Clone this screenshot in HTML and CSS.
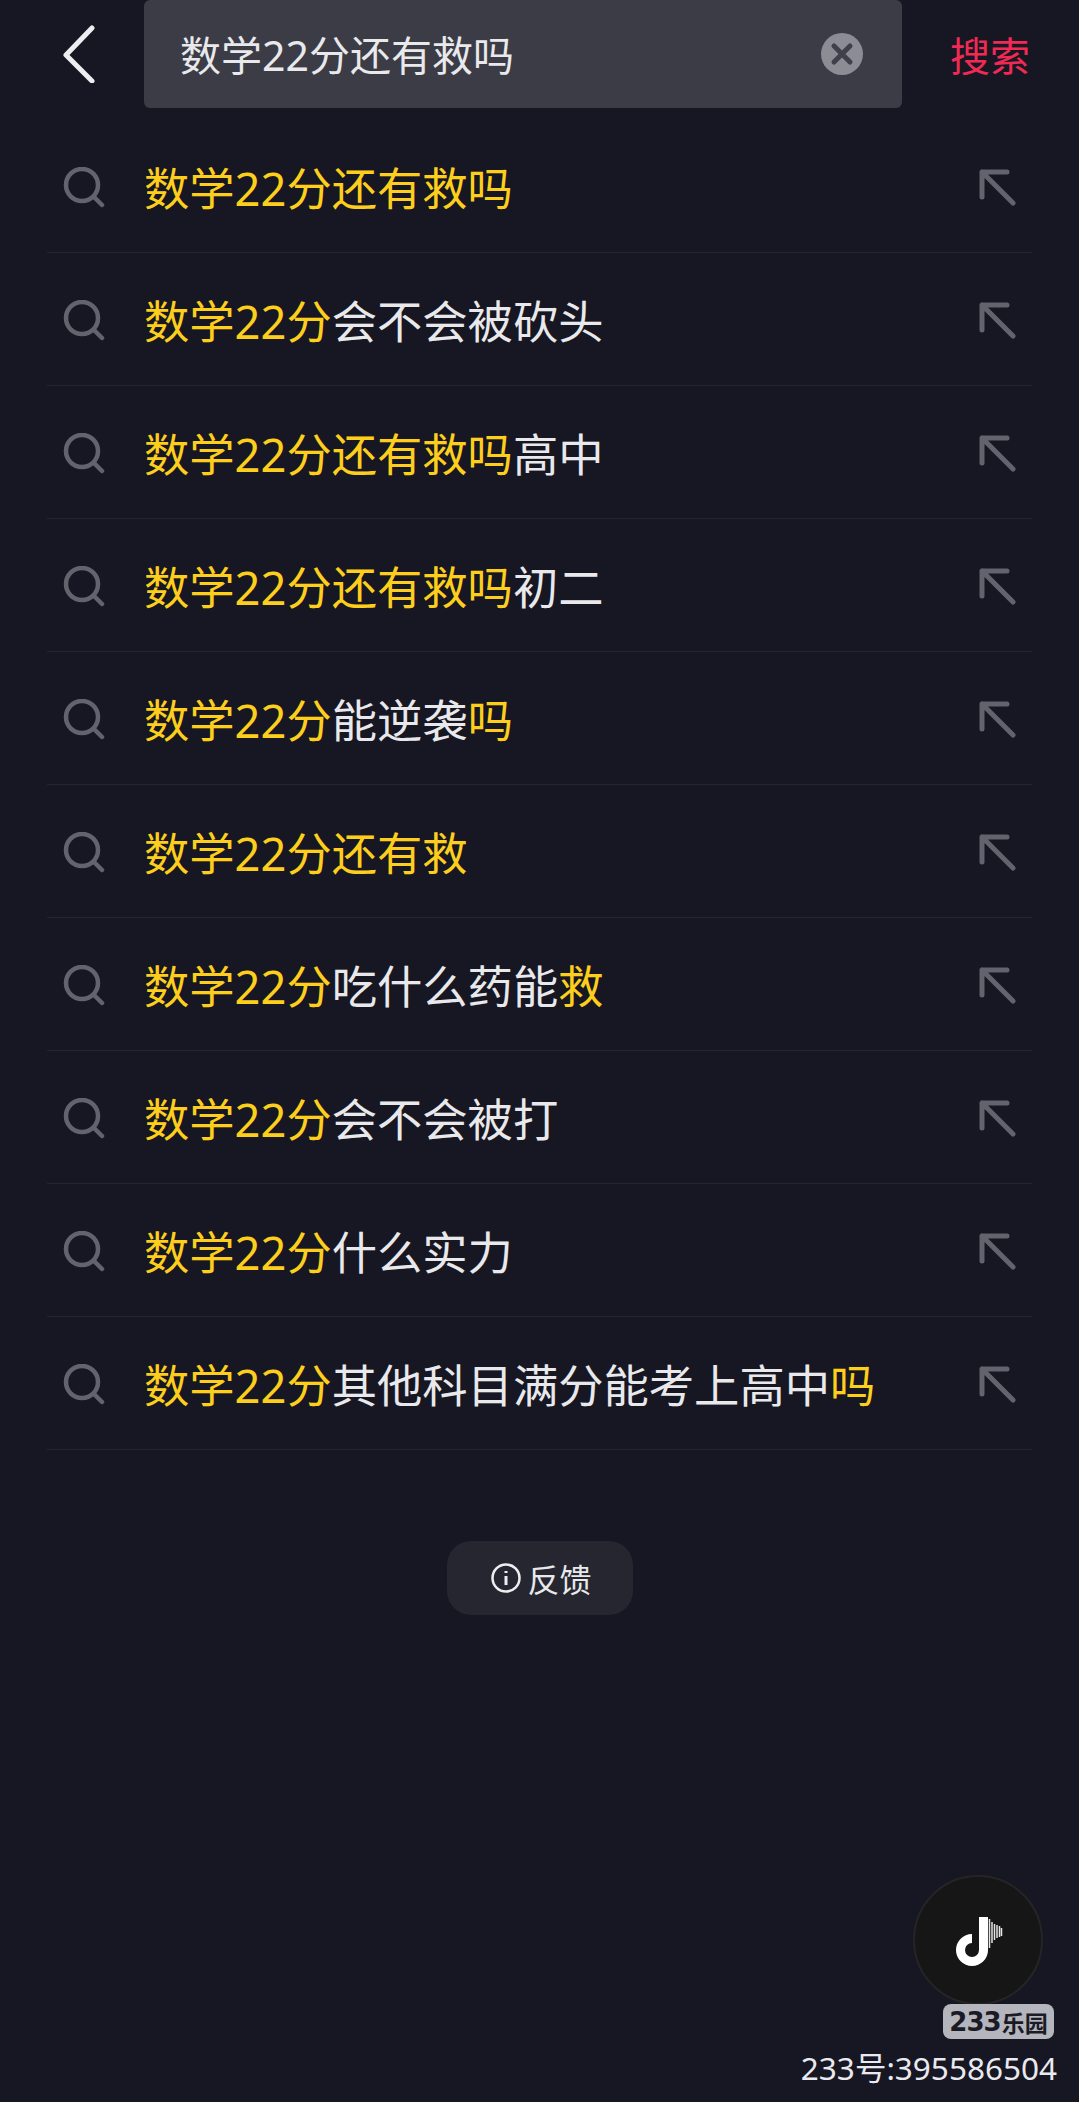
FILE: index.html
```html
<!DOCTYPE html>
<html lang="zh-CN">
  <head>
    <meta charset="UTF-8" />
    <meta name="viewport" content="width=device-width,initial-scale=1.0" />
    <title>搜索</title>
    <link rel="stylesheet" href="styles.css">
  </head>
  <body>
    <div class="search-bar">
      <svg class="back-icon" width="33" height="58" viewBox="0 0 33 58">
        <path d="M30 3 L4 30 L30 56" />
      </svg>
      <div class="search-box">
        <span class="search-text">数学22分还有救吗</span>
        <svg class="clear-icon" width="42" height="42" viewBox="0 0 42 42">
          <circle cx="21" cy="21" r="21" />
          <path d="M13 13 L29 29 M29 13 L13 29" />
        </svg>
      </div>
      <span class="search-btn">搜索</span>
    </div>

    <ul class="suggest-list">
      <li class="suggest-row">
        <svg class="find-icon" width="42" height="42" viewBox="0 0 42 42"><circle cx="19" cy="18" r="16" /><path d="M31 30 L39 38" /></svg>
        <span class="suggest-text"><b>数学22分还有救吗</b></span>
        <svg class="fill-icon" width="38" height="38" viewBox="0 0 38 38"><path d="M3 28 V3 H28 M3 3 L34 34" /></svg>
      </li>
      <li class="suggest-row">
        <svg class="find-icon" width="42" height="42" viewBox="0 0 42 42"><circle cx="19" cy="18" r="16" /><path d="M31 30 L39 38" /></svg>
        <span class="suggest-text"><b>数学22分</b>会不会被砍头</span>
        <svg class="fill-icon" width="38" height="38" viewBox="0 0 38 38"><path d="M3 28 V3 H28 M3 3 L34 34" /></svg>
      </li>
      <li class="suggest-row">
        <svg class="find-icon" width="42" height="42" viewBox="0 0 42 42"><circle cx="19" cy="18" r="16" /><path d="M31 30 L39 38" /></svg>
        <span class="suggest-text"><b>数学22分还有救吗</b>高中</span>
        <svg class="fill-icon" width="38" height="38" viewBox="0 0 38 38"><path d="M3 28 V3 H28 M3 3 L34 34" /></svg>
      </li>
      <li class="suggest-row">
        <svg class="find-icon" width="42" height="42" viewBox="0 0 42 42"><circle cx="19" cy="18" r="16" /><path d="M31 30 L39 38" /></svg>
        <span class="suggest-text"><b>数学22分还有救吗</b>初二</span>
        <svg class="fill-icon" width="38" height="38" viewBox="0 0 38 38"><path d="M3 28 V3 H28 M3 3 L34 34" /></svg>
      </li>
      <li class="suggest-row">
        <svg class="find-icon" width="42" height="42" viewBox="0 0 42 42"><circle cx="19" cy="18" r="16" /><path d="M31 30 L39 38" /></svg>
        <span class="suggest-text"><b>数学22分</b>能逆袭<b>吗</b></span>
        <svg class="fill-icon" width="38" height="38" viewBox="0 0 38 38"><path d="M3 28 V3 H28 M3 3 L34 34" /></svg>
      </li>
      <li class="suggest-row">
        <svg class="find-icon" width="42" height="42" viewBox="0 0 42 42"><circle cx="19" cy="18" r="16" /><path d="M31 30 L39 38" /></svg>
        <span class="suggest-text"><b>数学22分还有救</b></span>
        <svg class="fill-icon" width="38" height="38" viewBox="0 0 38 38"><path d="M3 28 V3 H28 M3 3 L34 34" /></svg>
      </li>
      <li class="suggest-row">
        <svg class="find-icon" width="42" height="42" viewBox="0 0 42 42"><circle cx="19" cy="18" r="16" /><path d="M31 30 L39 38" /></svg>
        <span class="suggest-text"><b>数学22分</b>吃什么药能<b>救</b></span>
        <svg class="fill-icon" width="38" height="38" viewBox="0 0 38 38"><path d="M3 28 V3 H28 M3 3 L34 34" /></svg>
      </li>
      <li class="suggest-row">
        <svg class="find-icon" width="42" height="42" viewBox="0 0 42 42"><circle cx="19" cy="18" r="16" /><path d="M31 30 L39 38" /></svg>
        <span class="suggest-text"><b>数学22分</b>会不会被打</span>
        <svg class="fill-icon" width="38" height="38" viewBox="0 0 38 38"><path d="M3 28 V3 H28 M3 3 L34 34" /></svg>
      </li>
      <li class="suggest-row">
        <svg class="find-icon" width="42" height="42" viewBox="0 0 42 42"><circle cx="19" cy="18" r="16" /><path d="M31 30 L39 38" /></svg>
        <span class="suggest-text"><b>数学22分</b>什么实力</span>
        <svg class="fill-icon" width="38" height="38" viewBox="0 0 38 38"><path d="M3 28 V3 H28 M3 3 L34 34" /></svg>
      </li>
      <li class="suggest-row">
        <svg class="find-icon" width="42" height="42" viewBox="0 0 42 42"><circle cx="19" cy="18" r="16" /><path d="M31 30 L39 38" /></svg>
        <span class="suggest-text"><b>数学22分</b>其他科目满分能考上高中<b>吗</b></span>
        <svg class="fill-icon" width="38" height="38" viewBox="0 0 38 38"><path d="M3 28 V3 H28 M3 3 L34 34" /></svg>
      </li>
    </ul>

    <div class="feedback-wrap">
      <div class="feedback-btn">
        <svg class="info-icon" width="30" height="30" viewBox="0 0 30 30">
          <circle cx="15" cy="15" r="13.5" />
          <path d="M15 13 V22 M15 8 V10" />
        </svg>
        <span>反馈</span>
      </div>
    </div>

    <div class="float-btn">
      <svg width="50" height="54" viewBox="0 0 50 54">
        <path class="note" d="M27.5 1 V34 A11.5 11.5 0 1 1 16 22.5" />
        <path class="note-lines" d="M33.5 3 V32 M36 6 V27 M38.5 8 V24 M41 9 V22 M43.5 10 V21 M45.5 12 V20" />
      </svg>
    </div>
    <div class="watermark">
      <span class="wm-badge"><b>233</b>乐园</span>
      <span class="wm-id">233号:395586504</span>
    </div>
  </body>
</html>
```

FILE: styles.css
```css
* {
  margin: 0;
  padding: 0;
  box-sizing: border-box;
}
html, body {
  font-family: "Noto Sans", "Noto Sans CJK SC", sans-serif;
  background: #161722;
  color: #e9e9ec;
  min-height: 100vh;
}
body {
  position: relative;
  height: 2102px;
  overflow: hidden;
}
svg {
  display: block;
  flex: none;
  fill: none;
}

/* top bar */
.search-bar {
  display: flex;
  align-items: center;
  height: 108px;
  padding-left: 62px;
}
.back-icon path {
  stroke: #eeeef0;
  stroke-width: 5;
  stroke-linecap: round;
  stroke-linejoin: round;
}
.search-box {
  display: flex;
  align-items: center;
  justify-content: space-between;
  width: 758px;
  height: 108px;
  margin-left: 49px;
  padding: 0 39px 0 36px;
  background: #3b3c46;
  border-radius: 6px;
}
.search-text {
  padding-top: 2px;
  font-size: 41px;
  line-height: 106px;
}
.clear-icon circle {
  fill: #8c8c95;
}
.clear-icon path {
  stroke: #3f404a;
  stroke-width: 5;
  stroke-linecap: round;
}
.search-btn {
  margin-left: 48px;
  font-size: 40px;
  color: #f02a55;
}

/* suggestions */
.suggest-list {
  list-style: none;
  margin: 12px 47px 0;
}
.suggest-row {
  display: flex;
  align-items: center;
  height: 133px;
  padding: 0 15px;
  border-bottom: 1px solid #24252f;
}
.find-icon {
  margin-top: 3px;
  margin-left: 1px;
}
.find-icon circle,
.find-icon path {
  stroke: #62636d;
  stroke-width: 4.5;
  stroke-linecap: round;
}
.suggest-text {
  flex: 1;
  margin-left: 39px;
  padding-top: 6px;
  font-size: 45.3px;
  line-height: 60px;
  white-space: nowrap;
}
.suggest-text b {
  font-weight: 400;
  color: #fdcf1c;
}
.fill-icon {
  margin-top: 4px;
}
.fill-icon path {
  stroke: #62636d;
  stroke-width: 5;
  stroke-linecap: round;
  stroke-linejoin: round;
}

/* feedback */
.feedback-wrap {
  display: flex;
  justify-content: center;
  margin-top: 91px;
}
.feedback-btn {
  display: flex;
  align-items: center;
  justify-content: center;
  gap: 6px;
  width: 186px;
  height: 74px;
  padding-left: 4px;
  background: #252630;
  border-radius: 24px;
  font-size: 32px;
}
.info-icon circle,
.info-icon path {
  stroke: #eeeef0;
  stroke-width: 2.5;
}
.info-icon path {
  stroke-width: 3;
}

/* floating bits in the corner */
.float-btn {
  position: absolute;
  left: 913px;
  top: 1875px;
  display: flex;
  align-items: center;
  justify-content: center;
  width: 130px;
  height: 130px;
  padding: 5px 0 0 5px;
  background: #161616;
  border: 2px solid #252525;
  border-radius: 50%;
}
.note {
  stroke: #fff;
  stroke-width: 9;
}
.note-lines {
  stroke: #e4e4e4;
  stroke-width: 1.5;
}
.watermark {
  position: absolute;
  right: 22px;
  top: 2004px;
  display: flex;
  flex-direction: column;
  align-items: flex-end;
}
.wm-badge {
  display: flex;
  align-items: center;
  justify-content: center;
  width: 111px;
  height: 35px;
  margin-right: 3px;
  background: #b5b5bd;
  border-radius: 8px;
  color: #1a1b25;
  font-size: 23px;
  font-weight: 700;
  white-space: nowrap;
}
.wm-badge b {
  font-family: "DejaVu Sans", sans-serif;
  font-size: 26px;
  font-weight: 700;
  letter-spacing: -1px;
  margin-right: 1px;
}
.wm-id {
  margin-top: 7px;
  font-size: 31.5px;
  line-height: 44px;
  color: #e9e9ef;
  white-space: nowrap;
}
```
